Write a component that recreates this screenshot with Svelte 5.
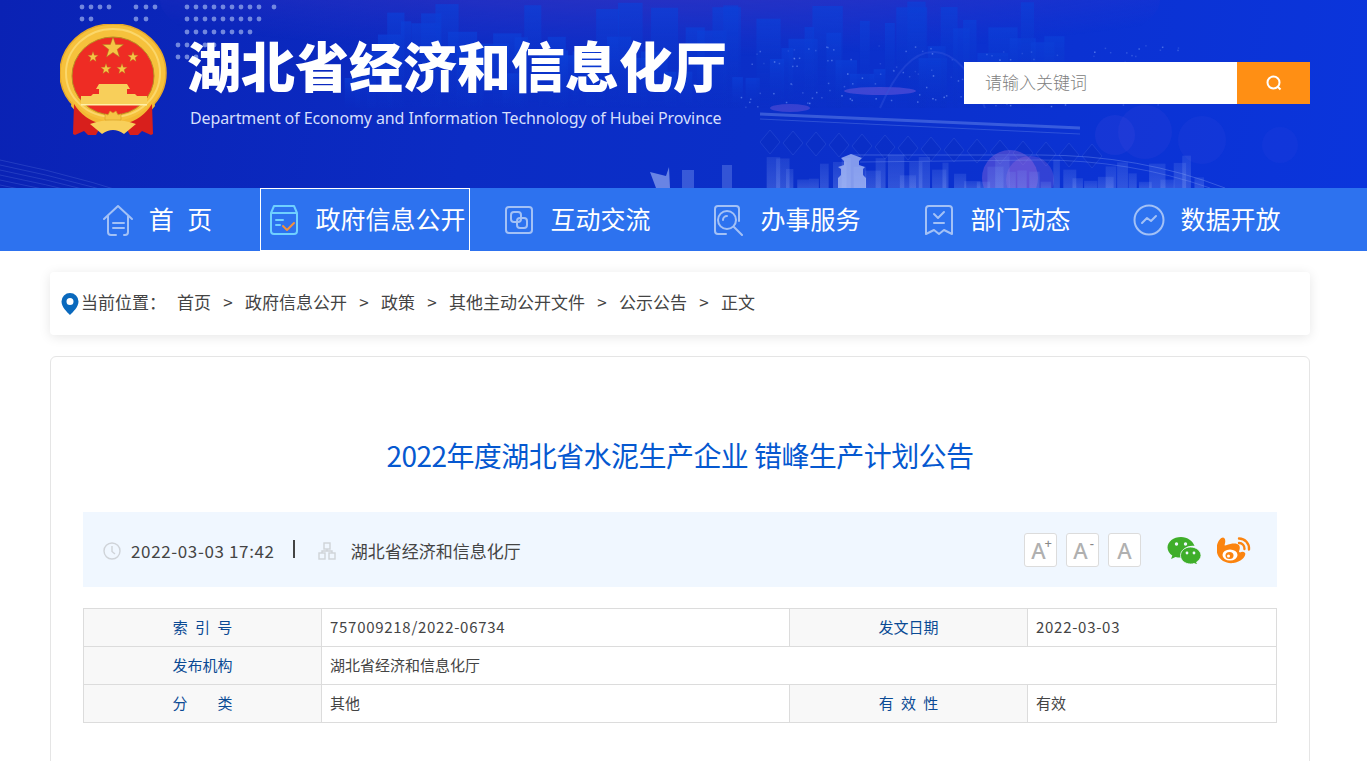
<script lang="ts">
  const navItems = [
    { label: '首 页', icon: 'home' },
    { label: '政府信息公开', icon: 'open', active: true },
    { label: '互动交流', icon: 'link' },
    { label: '办事服务', icon: 'search' },
    { label: '部门动态', icon: 'mark' },
    { label: '数据开放', icon: 'data' },
  ];
  const crumbs = ['首页', '政府信息公开', '政策', '其他主动公开文件', '公示公告', '正文'];

  // deterministic pseudo random, keeps the skyline stable
  let seed = 7;
  const rnd = () => (seed = (seed * 16807) % 2147483647) / 2147483647;

  const towers = Array.from({ length: 62 }, (_, i) => {
    const h = 30 + rnd() * 80;
    return { x: 340 + i * 11.5 + rnd() * 5, w: 9 + rnd() * 22, h };
  });
  const lights = Array.from({ length: 170 }, () => ({
    x: 740 + rnd() * 440,
    y: 45 + rnd() * 62,
    o: 0.15 + rnd() * 0.4,
  }));
  const lowCity = Array.from({ length: 40 }, (_, i) => {
    const h = 6 + rnd() * 28;
    return { x: 764 + i * 11 + rnd() * 4, w: 6 + rnd() * 11, h };
  });
  const dots: number[][] = [
    [82, 7], [91, 7], [100, 7], [109, 7], [136, 7], [146, 7], [155, 7],
    [82, 19], [91, 19], [136, 19], [146, 19],
  ];
  for (let i = 0; i < 9; i++) dots.push([187 + i * 9, 7], [187 + i * 9, 19]);
  dots.push([274, 7]);
  for (let i = 0; i < 8; i++) dots.push([187 + i * 9, 32]);
  for (let i = 0; i < 5; i++) dots.push([178 + i * 9, 45]);
  for (let i = 0; i < 3; i++) dots.push([178 + i * 9, 57]);
  const diamonds = Array.from({ length: 15 }, (_, i) => 770 + i * 23);
  const waves = [0, 1, 2, 3, 4, 5, 6];

  function star(cx: number, cy: number, r: number) {
    const pts: string[] = [];
    for (let i = 0; i < 10; i++) {
      const rad = i % 2 ? r * 0.4 : r;
      const a = -Math.PI / 2 + (i * Math.PI) / 5;
      pts.push(`${(cx + rad * Math.cos(a)).toFixed(1)},${(cy + rad * Math.sin(a)).toFixed(1)}`);
    }
    return pts.join(' ');
  }
  const smallStars = [[33, 33], [73, 33], [46, 45], [62, 45]];
</script>

<div class="page">
  <header class="banner">
    <svg class="scene" viewBox="0 0 1367 188" width="1367" height="188" aria-hidden="true">
      <defs>
        <radialGradient id="glow" cx="0.5" cy="0" r="0.8">
          <stop offset="0" stop-color="#5a36b4" stop-opacity="0.8" />
          <stop offset="0.6" stop-color="#4a36c0" stop-opacity="0.45" />
          <stop offset="1" stop-color="#3a36d0" stop-opacity="0" />
        </radialGradient>
        <linearGradient id="tower" x1="0" y1="0" x2="0" y2="1">
          <stop offset="0" stop-color="#0c40d8" stop-opacity="0.7" />
          <stop offset="1" stop-color="#0b2fc4" stop-opacity="0.15" />
        </linearGradient>
        <linearGradient id="low" x1="0" y1="0" x2="0" y2="1">
          <stop offset="0" stop-color="#7e9cf2" stop-opacity="0.3" />
          <stop offset="1" stop-color="#7e9cf2" stop-opacity="0.6" />
        </linearGradient>
      </defs>
      <ellipse cx="660" cy="0" rx="500" ry="95" fill="url(#glow)" />
      {#each towers as t}
        <rect x={t.x} y={108 - t.h} width={t.w} height={t.h} fill="url(#tower)" />
      {/each}
      {#each lights as l}
        <rect x={l.x} y={l.y} width="1.5" height="1.5" fill="#8fb0ff" opacity={l.o} />
      {/each}
      <ellipse cx="880" cy="91" rx="36" ry="4" fill="#8c64e0" opacity="0.4" />
      <ellipse cx="790" cy="108" rx="20" ry="4" fill="#8c64e0" opacity="0.35" />
      <path d="M880 108Q905 50 935 52T985 108" fill="none" stroke="#3454dc" stroke-width="2" opacity="0.4" />
      <path d="M760 114L1080 128" stroke="#7d9cf0" stroke-width="3" opacity="0.4" />
      <path d="M760 119L1080 134" stroke="#7d9cf0" stroke-width="1" opacity="0.3" />
      {#each diamonds as x, i}
        <path d={`M${x} ${130 + i}l10 12l-10 12l-10-12z`} fill="#0b2dc0" opacity="0.4" stroke="#5476e4" stroke-width="0.6" />
      {/each}
      <circle cx="1115" cy="135" r="20" fill="#5a55e0" opacity="0.14" />
      <circle cx="1145" cy="132" r="27" fill="#5a55e0" opacity="0.12" />
      <circle cx="1202" cy="140" r="24" fill="#5a55e0" opacity="0.1" />
      <circle cx="1280" cy="145" r="18" fill="#5a55e0" opacity="0.08" />
      <circle cx="1010" cy="178" r="28" fill="#c07ae0" opacity="0.3" />
      <circle cx="1030" cy="180" r="24" fill="#c07ae0" opacity="0.22" />
      {#each lowCity as b}
        <rect x={b.x} y={188 - b.h} width={b.w} height={b.h} fill="url(#low)" opacity="0.55" />
      {/each}
      <path d="M838 188v-10l3-3v-6l-3-2 6-2v-4l-3-3 10-4 11 4-3 3v4l6 2-2 2v6l3 3v10z" fill="#b6c8fa" opacity="0.7" />
      <path d="M850 155L1040 155Q1140 155 1225 188" fill="none" stroke="#8aa6f4" stroke-width="1" opacity="0.35" />
      <path d="M860 162L1040 160Q1130 160 1210 188" fill="none" stroke="#8aa6f4" stroke-width="1" opacity="0.3" />
      <path d="M650 172l16 4 3-9 1 21h-14z" fill="#a9bef6" opacity="0.6" />
      <rect x="682" y="170" width="12" height="18" fill="#7e9cf2" opacity="0.4" />
      <rect x="722" y="165" width="10" height="23" fill="#7e9cf2" opacity="0.35" />
      {#each waves as w}
        <path d={`M0 ${160 + w * 5}Q90 ${178 + w * 5} 190 ${214 + w * 3}`} fill="none" stroke="#7a97ee" stroke-width="1" opacity="0.22" />
      {/each}
      {#each dots as d}
        <circle cx={d[0]} cy={d[1]} r="2.4" fill="#9db1ee" opacity="0.7" />
      {/each}
    </svg>

    <div class="brand">
      <svg class="emblem" viewBox="0 0 108 114" width="108" height="114" aria-hidden="true">
        <ellipse cx="53" cy="49" rx="53" ry="49" fill="#f6c13c" stroke="#e7a92a" stroke-width="1.500" />
        <ellipse cx="53" cy="49" rx="47" ry="44" fill="none" stroke="#fbd76a" stroke-width="2" />
        <ellipse cx="53" cy="52" rx="41" ry="39" fill="#ee2c24" stroke="#b98a22" stroke-width="1" />
        <polygon points={star(53, 24, 11)} fill="#f6c445" stroke="#a8791c" stroke-width="0.5" />
        {#each smallStars as s}
          <polygon points={star(s[0], s[1], 5.500)} fill="#f6c445" stroke="#a8791c" stroke-width="0.3" />
        {/each}
        <path d="M39 60h28l3 5h-3v5H39v-5h-3zM21 72h66v8H21z" fill="#f8cf5a" />
        <path d="M33 70h42l2 2H31z" fill="#f8cf5a" />
        <path d="M21 80h66v1.500H21z" fill="#fff0a8" />
        <path d="M12 77Q28 96 53 97Q78 96 94 77L95 82Q78 104 53 103Q28 104 11 82z" fill="#f3b935" />
        <path d="M14 80Q24 96 42 100L36 111H28l-4-4-9 4-2-1z" fill="#d81f1c" />
        <path d="M92 80Q82 96 64 100L70 111H78l4-4 9 4 2-1z" fill="#d81f1c" />
        <path d="M30 100Q53 92 76 100L64 110Q53 102 42 110z" fill="#f8cf5a" />
        <path d="M45 96v-6l3 1 2-4 3 2 3-2 2 4 3-1v6z" fill="#f6c445" stroke="#d39a24" stroke-width="0.6" />
      </svg>
      <div class="names">
        <h1>湖北省经济和信息化厅</h1>
        <p>Department of Economy and Information Technology of Hubei Province</p>
      </div>
    </div>

    <form class="search" onsubmit={(e) => e.preventDefault()}>
      <input type="text" placeholder="请输入关键词" />
      <button type="submit" aria-label="搜索">
        <svg viewBox="0 0 18 18" width="18" height="18">
          <circle cx="8.500" cy="8.500" r="6" fill="none" stroke="#fff" stroke-width="2" />
          <path d="M13 13l2.500 2.500" stroke="#fff" stroke-width="2" />
        </svg>
      </button>
    </form>
  </header>

  <nav class="nav">
    {#each navItems as item}
      <a href="#top" class="nav-item" class:active={item.active}>
        <svg class="nav-icon" viewBox="0 0 32 32" width="32" height="32" aria-hidden="true">
          {#if item.icon === 'home'}
            <path d="M2 15L16 2l14 13M6 12v16q0 3 3 3h5M26 12v16q0 3-3 3h-1" />
            <path d="M11 19h11M11 24h11" />
          {:else if item.icon === 'open'}
            <path class="cyan" d="M3 9v18q0 3 3 3h20q3 0 3-3V9M3 9l3-7h20l3 7z" />
            <path class="cyan" d="M8 16h7M8 21h4" />
            <path class="tick" d="M15 22l4 4 7-7" />
          {:else if item.icon === 'link'}
            <path d="M3 10V6q0-3 3-3h20q3 0 3 3v4M29 22v4q0 3-3 3H6q-3 0-3-3v-4M3 10v12M29 10v12" />
            <rect x="8" y="8" width="10" height="10" rx="3" />
            <rect x="14" y="14" width="10" height="10" rx="3" />
          {:else if item.icon === 'search'}
            <path d="M13 30H5q-3 0-3-3V5q0-3 3-3h18q3 0 3 3v12" />
            <circle cx="14" cy="16" r="9" />
            <path d="M10 16a4 4 0 0 1 4-4M21 23l8 8" />
          {:else if item.icon === 'mark'}
            <path d="M3 30V5q0-3 3-3h20q3 0 3 3v25l-8-4-5 4-5-4z" />
            <path d="M11 10l4 4 6-6M11 19h10" />
          {:else}
            <circle cx="16" cy="16" r="14.500" />
            <path d="M9 19l5-5 4 3 5-5" />
          {/if}
        </svg>
        <span>{item.label}</span>
      </a>
    {/each}
  </nav>

  <div class="breadcrumb">
    <svg viewBox="0 0 18 22" width="18" height="22" aria-hidden="true">
      <path fill-rule="evenodd" d="M9 0a8.500 8.500 0 0 1 8.500 8.500C17.500 14 12 19 9 22 6 19 .5 14 .5 8.500A8.500 8.500 0 0 1 9 0zm0 5a3.500 3.500 0 1 0 0 7 3.500 3.500 0 0 0 0-7z" fill="#0a69bd" />
    </svg>
    <span class="here">当前位置：</span>
    {#each crumbs as crumb, i}
      {#if i > 0}<span class="sep">&gt;</span>{/if}
      <a href="#top">{crumb}</a>
    {/each}
  </div>

  <main class="card">
    <h2>2022年度湖北省水泥生产企业 错峰生产计划公告</h2>

    <div class="meta">
      <div class="meta-left">
        <svg viewBox="0 0 18 18" width="18" height="18" aria-hidden="true" class="meta-icon">
          <circle cx="9" cy="9" r="8" />
          <path d="M9 4v5.500l3 2.500" />
        </svg>
        <span class="date">2022-03-03 17:42</span>
        <span class="bar"></span>
        <svg viewBox="0 0 18 18" width="18" height="18" aria-hidden="true" class="meta-icon">
          <rect x="6" y="1" width="6" height="6" />
          <rect x="1" y="11" width="6" height="6" />
          <rect x="11" y="11" width="6" height="6" />
          <path d="M9 7v2H4v2M9 9h5v2" />
        </svg>
        <span class="org">湖北省经济和信息化厅</span>
      </div>
      <div class="meta-right">
        <button class="size" aria-label="放大">A<sup>+</sup></button>
        <button class="size" aria-label="缩小">A<sup>-</sup></button>
        <button class="size" aria-label="默认">A</button>
        <svg class="wechat" viewBox="0 0 34 28" width="34" height="28" aria-hidden="true">
          <path d="M14 1C6.500 1 .5 5.800.5 11.500c0 3.300 2 6.100 4.800 8l-1.200 3.600 4.400-2.200c1.700.5 3.500.8 5.500.7C13 14 20 9 27.500 10 26 5 20.500 1 14 1z" fill="#3fae2a" />
          <circle cx="9.500" cy="8" r="1.700" fill="#f0f7ff" />
          <circle cx="18.500" cy="8" r="1.700" fill="#f0f7ff" />
          <path d="M23.500 11c-5.700 0-10 3.900-10 8.500s4.300 8.500 10 8.500c1.400 0 2.500-.2 3.700-.6l3.300 1.600-.9-3c2.600-1.600 4.400-4 4.400-6.500 0-4.600-4.800-8.500-10.500-8.500z" fill="#3fae2a" stroke="#f0f7ff" stroke-width="0.8" />
          <circle cx="20" cy="17" r="1.400" fill="#f0f7ff" />
          <circle cx="27" cy="17" r="1.400" fill="#f0f7ff" />
        </svg>
        <svg class="weibo" viewBox="0 0 34 28" width="34" height="28" aria-hidden="true">
          <path d="M23 16.500c-.8-.3-1.300-.5-.9-1.500.9-2.300 1-4.300 0-5.700-1.900-2.600-7.100-2.500-13-.1 0 0-1.900.8-1.400-.7C8.600 5.600 8.500 3.300 7.200 2 4.300-.9-3.400 9 .8 19c2.300 5.400 9 9 15.500 8 7.600-1.200 12-5.700 12-9.300 0-1.500-2.500-3-5.300-1.200z" fill="#fb8410" />
          <ellipse cx="13" cy="19" rx="7.500" ry="5.500" fill="#fff" />
          <ellipse cx="12.500" cy="19.500" rx="4" ry="3.500" fill="#fb8410" />
          <circle cx="11.500" cy="20" r="1.500" fill="#fff" />
          <path d="M22 2.500a10 10 0 0 1 10 11M22 7a5.500 5.500 0 0 1 5.500 6" fill="none" stroke="#fb8410" stroke-width="2.400" stroke-linecap="round" />
        </svg>
      </div>
    </div>

    <table>
      <colgroup>
        <col class="c1" /><col class="c2" /><col class="c3" /><col />
      </colgroup>
      <tbody>
        <tr>
          <th>索 引 号</th>
          <td class="num">757009218/2022-06734</td>
          <th>发文日期</th>
          <td class="num">2022-03-03</td>
        </tr>
        <tr>
          <th>发布机构</th>
          <td colspan="3">湖北省经济和信息化厅</td>
        </tr>
        <tr>
          <th>分&emsp;&emsp;类</th>
          <td>其他</td>
          <th>有 效 性</th>
          <td>有效</td>
        </tr>
      </tbody>
    </table>
  </main>
</div>

<style>
  :global(body) {
    margin: 0;
    background: #fff;
  }

  .page {
    height: 761px;
    overflow: hidden;
    font-family: "Noto Sans CJK SC", "Noto Sans", sans-serif;
    color: #333;
  }

  a {
    color: inherit;
    text-decoration: none;
  }

  .banner {
    position: relative;
    height: 188px;
    display: flex;
    justify-content: space-between;
    padding: 24px 57px 0 60px;
    box-sizing: border-box;
    background: linear-gradient(100deg, #0a22b4 0%, #0b2cc4 35%, #0b2fc8 55%, #0b35dc 100%);
    overflow: hidden;
  }

  .scene {
    position: absolute;
    top: 0;
    left: 0;
    filter: blur(0.7px);
  }

  .brand {
    position: relative;
    display: flex;
    gap: 19px;
  }

  .emblem {
    flex: none;
  }

  .names h1 {
    margin: 9px 0 0;
    font-size: 54px;
    font-weight: 900;
    line-height: 64px;
    color: #fff;
    white-space: nowrap;
  }

  .names p {
    margin: 10px 0 0 3px;
    font-family: "Noto Sans", sans-serif;
    font-size: 16px;
    letter-spacing: -0.1px;
    line-height: 22px;
    color: #d6dffc;
    white-space: nowrap;
  }

  .search {
    position: relative;
    display: flex;
    height: 42px;
    margin-top: 38px;
    width: 346px;
  }

  .search input {
    flex: 1;
    min-width: 0;
    border: 0;
    outline: 0;
    padding: 0 0 3px 21px;
    font: 300 17px "Noto Sans CJK SC", sans-serif;
    background: #fff;
  }

  .search input::placeholder {
    color: #808080;
    opacity: 1;
  }

  .search button {
    width: 73px;
    border: 0;
    padding: 2px 0 0;
    background: #ff8f14;
  }

  .nav {
    display: flex;
    height: 63px;
    padding-left: 50px;
    background: #2d72ef;
  }

  .nav-item {
    flex: none;
    width: 210px;
    box-sizing: border-box;
    display: flex;
    align-items: center;
    justify-content: center;
    gap: 15px;
    padding-left: 4px;
    color: #fff;
    font-size: 25px;
    word-spacing: 8px;
    white-space: nowrap;
    border: 1px solid transparent;
  }

  .nav-item.active {
    border-color: #fff;
  }

  .nav-item span {
    flex: none;
    margin-top: -4px;
  }

  .nav-icon {
    flex: none;
    fill: none;
    stroke: #a3c1f6;
    stroke-width: 2;
    stroke-linecap: round;
    stroke-linejoin: round;
  }

  .nav-icon .cyan {
    stroke: #6fd0ff;
  }

  .nav-icon .tick {
    stroke: #f5913a;
  }

  .breadcrumb {
    display: flex;
    align-items: center;
    width: 1260px;
    height: 63px;
    box-sizing: border-box;
    margin: 21px 0 0 50px;
    padding-left: 11px;
    background: #fff;
    border-radius: 4px;
    box-shadow: 0 2px 12px rgba(0, 0, 0, 0.1);
    font-size: 17px;
    color: #444;
  }

  .breadcrumb a,
  .breadcrumb .here,
  .breadcrumb .sep {
    margin-top: -4px;
  }

  .breadcrumb .here {
    margin-right: 11px;
    margin-left: 2px;
  }

  .sep {
    width: 34px;
    text-align: center;
  }

  .card {
    width: 1260px;
    height: 600px;
    box-sizing: border-box;
    margin: 21px 0 0 50px;
    padding: 0 32px;
    background: #fff;
    border: 1px solid #e5e5e5;
    border-radius: 6px;
  }

  h2 {
    margin: 77px 0 0;
    text-align: center;
    font-size: 28px;
    font-weight: 400;
    line-height: 42px;
    color: #0558d0;
    letter-spacing: -0.56px;
  }

  .meta {
    display: flex;
    align-items: center;
    justify-content: space-between;
    height: 75px;
    margin-top: 36px;
    padding: 0 26px 0 20px;
    background: #f0f7ff;
  }

  .meta-left,
  .meta-right {
    display: flex;
    align-items: center;
  }

  .meta-left {
    font-size: 17px;
    padding-top: 2px;
    color: #444;
  }

  .meta-icon {
    flex: none;
    fill: none;
    stroke: #cfd3d8;
    stroke-width: 1.4;
  }

  .date {
    margin-left: 10px;
    letter-spacing: 0.63px;
  }

  .bar {
    width: 2px;
    height: 18px;
    margin: 0 23px 4px 18px;
    background: #444;
  }

  .org {
    margin-left: 15px;
  }

  .size {
    position: relative;
    width: 33px;
    height: 34px;
    margin-right: 9px;
    padding: 0 4px 0 0;
    border: 1px solid #dcdcdc;
    border-radius: 3px;
    background: #fff;
    color: #b0b0b0;
    font: 500 22px "Noto Sans", sans-serif;
    line-height: 32px;
  }

  .size:nth-child(3) {
    padding: 0;
    margin-right: 0;
  }

  .size sup {
    position: absolute;
    top: -7px;
    right: 4px;
    font-size: 13px;
    color: #888;
  }

  .wechat {
    margin-left: 26px;
  }

  .weibo {
    margin-left: 16px;
  }

  table {
    width: 100%;
    margin-top: 21px;
    border-collapse: collapse;
    table-layout: fixed;
    font-size: 15px;
  }

  .c1 {
    width: 238px;
  }

  .c2 {
    width: 468px;
  }

  .c3 {
    width: 238px;
  }

  th,
  td {
    height: 38px;
    box-sizing: border-box;
    padding: 0 0 2px;
    border: 1px solid #dcdcdc;
  }

  th {
    background: #f8f8f8;
    color: #0a4a94;
    font-weight: 400;
    text-align: center;
    word-spacing: 4px;
  }

  td {
    padding-left: 8px;
    color: #444;
  }

  td.num {
    letter-spacing: 0.72px;
  }
</style>
